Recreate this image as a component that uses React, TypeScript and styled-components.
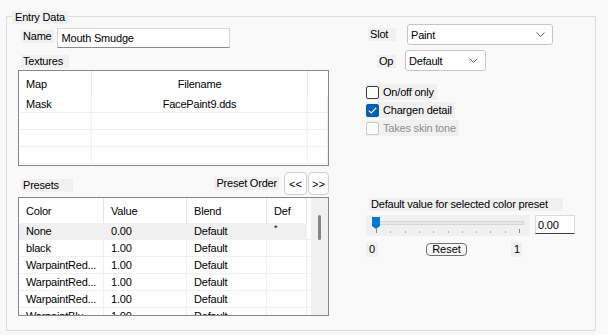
import React from 'react';
import styled, { createGlobalStyle } from 'styled-components';

const Global = createGlobalStyle`
  html, body { margin: 0; padding: 0; background: #f9f9f9; }
  body {
    font-family: "Liberation Sans", Arial, sans-serif;
    font-size: 11px;
    letter-spacing: -0.2px;
    color: #000;
    width: 608px;
    height: 335px;
    overflow: hidden;
  }
  * { box-sizing: border-box; }
`;

const Page = styled.div`
  padding: 16px 0 0 6px;
`;

const GroupBox = styled.section`
  position: relative;
  width: 590px;
  height: 315px;
  border: 1px solid #dcdcdc;
  display: flex;
  gap: 37px;
  padding-left: 11px;
`;

const Legend = styled.span`
  position: absolute;
  top: -6px;
  left: 5px;
  height: 13px;
  line-height: 13px;
  padding: 0 3px;
  background: #f0f0f0;
`;

const LeftColumn = styled.div`
  width: 311px;
  padding-top: 11px;
  display: flex;
  flex-direction: column;
  align-items: flex-start;
`;

const RightColumn = styled.div`
  width: 212px;
  padding-top: 7px;
  display: flex;
  flex-direction: column;
  align-items: flex-start;
`;

const Caption = styled.span<{ $w?: number; $mt?: number; $ml?: number }>`
  display: inline-block;
  height: 13px;
  line-height: 13px;
  padding: 0 2px 0 2px;
  background: #f0f0f0;
  white-space: nowrap;
  width: ${p => (p.$w ? `${p.$w}px` : 'auto')};
  margin-top: ${p => p.$mt ?? 0}px;
  margin-left: ${p => p.$ml ?? 0}px;
`;

const NameRow = styled.div`
  display: flex;
  align-items: flex-start;
  gap: 3px;
  padding-left: 3px;
  height: 20px;
`;

const TextBox = styled.div<{ $w: number; $h: number }>`
  width: ${p => p.$w}px;
  height: ${p => p.$h}px;
  background: #fff;
  border: 1px solid #d6d6d6;
  border-bottom-color: #8a8a8a;
  padding-left: 4px;
  display: flex;
  align-items: center;
`;

const ListBox = styled.div<{ $h: number; $mt: number }>`
  width: 311px;
  height: ${p => p.$h}px;
  margin-top: ${p => p.$mt}px;
  border: 1px solid #828790;
  background: #fff;
  display: flex;
  overflow: hidden;
`;

const ListBody = styled.div`
  flex: 1;
  overflow: hidden;
`;

const HeaderRow = styled.div<{ $cols: string; $h: number }>`
  display: grid;
  grid-template-columns: ${p => p.$cols};
  height: ${p => p.$h}px;
`;

const HeaderCell = styled.div<{ $center?: boolean }>`
  display: flex;
  align-items: center;
  justify-content: ${p => (p.$center ? 'center' : 'flex-start')};
  padding-left: ${p => (p.$center ? 0 : 7)}px;
  border-right: 1px solid #e5e5e5;
  white-space: nowrap;
  &:last-child { border-right: none; }
`;

const Row = styled.div<{ $cols: string; $selected?: boolean }>`
  display: grid;
  grid-template-columns: ${p => p.$cols};
  height: 17px;
  background: ${p => (p.$selected ? '#f0f0f0' : '#fff')};
`;

const Cell = styled.div<{ $center?: boolean; $blank?: boolean }>`
  display: flex;
  align-items: center;
  justify-content: ${p => (p.$center ? 'center' : 'flex-start')};
  padding-left: ${p => (p.$center ? 0 : 7)}px;
  border-right: 1px solid #f0f0f0;
  border-bottom: 1px solid #f0f0f0;
  white-space: nowrap;
  overflow: hidden;
  background: ${p => (p.$blank ? '#fff' : 'transparent')};
`;

const Star = styled.span`
  font-size: 9px;
  line-height: 9px;
  margin-top: -5px;
`;

const ScrollBar = styled.div`
  width: 17px;
  background: #f0f0f0;
  padding: 17px 0 0 7px;
`;

const Thumb = styled.div`
  width: 3px;
  height: 25px;
  border-radius: 2px;
  background: #858585;
`;

const PresetBar = styled.div`
  display: flex;
  align-items: flex-start;
  width: 311px;
  height: 23px;
  margin-top: 6px;
`;

const Spacer = styled.div`
  flex: 1;
`;

const SmallButton = styled.button<{ $w: number; $ml: number }>`
  width: ${p => p.$w}px;
  height: 23px;
  margin-left: ${p => p.$ml}px;
  padding: 0;
  border: 1px solid #d0d0d0;
  border-radius: 4px;
  background: #fdfdfd;
  font: inherit;
  letter-spacing: 0;
  color: #000;
`;

const FieldRow = styled.div<{ $mt?: number }>`
  display: flex;
  align-items: center;
  height: 21px;
  margin-top: ${p => p.$mt ?? 0}px;
`;

const LabelCell = styled.div`
  width: 30px;
  display: flex;
  justify-content: flex-end;
`;

const Combo = styled.div<{ $w: number; $ml: number }>`
  width: ${p => p.$w}px;
  height: 21px;
  margin-left: ${p => p.$ml}px;
  background: #fff;
  border: 1px solid #c6c6c6;
  border-radius: 3px;
  display: flex;
  align-items: center;
  justify-content: space-between;
  padding: 0 7px 0 3px;
`;

const CheckList = styled.div`
  display: flex;
  flex-direction: column;
  align-items: flex-start;
  gap: 2px;
  margin-top: 13px;
`;

const CheckRow = styled.label<{ $disabled?: boolean }>`
  display: inline-flex;
  align-items: center;
  gap: 4px;
  height: 16px;
  padding-right: 3px;
  background: #f0f0f0;
  color: ${p => (p.$disabled ? '#8d8d8d' : '#000')};
`;

const Box = styled.span<{ $checked?: boolean; $disabled?: boolean }>`
  width: 13px;
  height: 13px;
  border-radius: 2px;
  border: 1px solid ${p => (p.$checked ? '#005fb8' : p.$disabled ? '#c8c8c8' : '#3a3a3a')};
  background: ${p => (p.$checked ? '#005fb8' : '#fbfbfb')};
  display: flex;
  align-items: center;
  justify-content: center;
`;

const SliderBlock = styled.div`
  margin-top: 62px;
  display: flex;
  flex-direction: column;
  align-items: flex-start;
`;

const SliderRow = styled.div`
  display: flex;
  align-items: flex-start;
  gap: 5px;
  margin-top: 4px;
`;

const Track = styled.div`
  width: 164px;
  height: 21px;
  background: #f0f0f0;
`;

const ValueBox = styled.div`
  width: 40px;
  height: 19px;
  background: #fff;
  border: 1px solid #dadada;
  border-bottom-color: #404040;
  padding-left: 2px;
  display: flex;
  align-items: center;
`;

const ScaleRow = styled.div`
  display: flex;
  align-items: flex-start;
  margin-top: 6px;
`;

const ScaleLabel = styled.span<{ $ml?: number; $w: number }>`
  display: inline-block;
  width: ${p => p.$w}px;
  height: 15px;
  line-height: 15px;
  padding-left: 3px;
  margin-left: ${p => p.$ml ?? 0}px;
  background: #f0f0f0;
`;

const ResetButton = styled.button`
  margin-left: 48px;
  margin-top: 1px;
  width: 41px;
  height: 13px;
  padding: 0;
  border: 1px solid #707070;
  border-radius: 4px;
  background: #f7f7f7;
  font: inherit;
  line-height: 11px;
  color: #000;
`;

const Chevron = () => (
  <svg width="9" height="5" viewBox="0 0 9 5">
    <polyline points="0.5,0.5 4.5,4.5 8.5,0.5" fill="none" stroke="#606060" strokeWidth="1" />
  </svg>
);

const Check = () => (
  <svg width="9" height="7" viewBox="0 0 9 7">
    <polyline points="0.8,3.6 3.2,6 8.2,0.8" fill="none" stroke="#fff" strokeWidth="1.2" />
  </svg>
);

const TrackDrawing = () => {
  const ticks = Array.from({ length: 11 }, (_, i) => 10 + (143 * i) / 10);
  return (
    <svg width="164" height="21" viewBox="0 0 164 21">
      <rect x="12.5" y="6.5" width="145" height="3" fill="#e7e7e7" stroke="#d6d6d6" />
      {ticks.map((x, i) => (
        <line
          key={i}
          x1={Math.round(x) + 0.5}
          x2={Math.round(x) + 0.5}
          y1={i === 0 || i === 10 ? 14 : 16}
          y2={18}
          stroke={i === 0 || i === 10 ? '#8a8a8a' : '#b8b8b8'}
          strokeWidth="1"
        />
      ))}
      <path d="M6 2 H14 V11 L10 14 L6 11 Z" fill="#0078d7" />
    </svg>
  );
};

const texCols = '73px 216px 1fr';
const presetCols = '85px 83px 80px 40px 1fr';

const presets = [
  { color: 'None', value: '0.00', blend: 'Default', def: true },
  { color: 'black', value: '1.00', blend: 'Default', def: false },
  { color: 'WarpaintRed...', value: '1.00', blend: 'Default', def: false },
  { color: 'WarpaintRed...', value: '1.00', blend: 'Default', def: false },
  { color: 'WarpaintRed...', value: '1.00', blend: 'Default', def: false },
  { color: 'WarpaintBlu...', value: '1.00', blend: 'Default', def: false },
];

export default function App() {
  return (
    <>
      <Global />
      <Page>
        <GroupBox>
          <Legend>Entry Data</Legend>
          <LeftColumn>
            <NameRow>
              <Caption $mt={2}>Name</Caption>
              <TextBox $w={173} $h={20}>Mouth Smudge</TextBox>
            </NameRow>
            <Caption $mt={7} $ml={3} $w={48}>Textures</Caption>
            <ListBox $h={96} $mt={2}>
              <ListBody>
                <HeaderRow $cols={texCols} $h={25}>
                  <HeaderCell>Map</HeaderCell>
                  <HeaderCell $center>Filename</HeaderCell>
                  <HeaderCell />
                </HeaderRow>
                <Row $cols={texCols}>
                  <Cell>Mask</Cell>
                  <Cell $center>FacePaint9.dds</Cell>
                  <Cell />
                </Row>
                {[0, 1, 2, 3].map(i => (
                  <Row key={i} $cols={texCols}>
                    <Cell />
                    <Cell />
                    <Cell />
                  </Row>
                ))}
              </ListBody>
            </ListBox>
            <PresetBar>
              <Caption $mt={7} $ml={3} $w={52}>Presets</Caption>
              <Spacer />
              <Caption $mt={5}>Preset Order</Caption>
              <SmallButton $w={23} $ml={5}>&lt;&lt;</SmallButton>
              <SmallButton $w={21} $ml={1}>&gt;&gt;</SmallButton>
            </PresetBar>
            <ListBox $h={119} $mt={2}>
              <ListBody>
                <HeaderRow $cols={presetCols} $h={25}>
                  <HeaderCell>Color</HeaderCell>
                  <HeaderCell>Value</HeaderCell>
                  <HeaderCell>Blend</HeaderCell>
                  <HeaderCell>Def</HeaderCell>
                  <HeaderCell />
                </HeaderRow>
                {presets.map((p, i) => (
                  <Row key={i} $cols={presetCols} $selected={i === 0}>
                    <Cell>{p.color}</Cell>
                    <Cell>{p.value}</Cell>
                    <Cell>{p.blend}</Cell>
                    <Cell>{p.def ? <Star>*</Star> : null}</Cell>
                    <Cell $blank />
                  </Row>
                ))}
              </ListBody>
              <ScrollBar>
                <Thumb />
              </ScrollBar>
            </ListBox>
          </LeftColumn>
          <RightColumn>
            <FieldRow>
              <LabelCell>
                <Caption $w={28}>Slot</Caption>
              </LabelCell>
              <Combo $w={146} $ml={11}>
                <span>Paint</span>
                <Chevron />
              </Combo>
            </FieldRow>
            <FieldRow $mt={5}>
              <LabelCell>
                <Caption $w={19} $mt={2}>Op</Caption>
              </LabelCell>
              <Combo $w={81} $ml={9}>
                <span>Default</span>
                <Chevron />
              </Combo>
            </FieldRow>
            <CheckList>
              <CheckRow>
                <Box />
                On/off only
              </CheckRow>
              <CheckRow>
                <Box $checked>
                  <Check />
                </Box>
                Chargen detail
              </CheckRow>
              <CheckRow $disabled>
                <Box $disabled />
                Takes skin tone
              </CheckRow>
            </CheckList>
            <SliderBlock>
              <Caption $ml={3} $w={194}>Default value for selected color preset</Caption>
              <SliderRow>
                <Track>
                  <TrackDrawing />
                </Track>
                <ValueBox>0.00</ValueBox>
              </SliderRow>
              <ScaleRow>
                <ScaleLabel $w={12}>0</ScaleLabel>
                <ResetButton>Reset</ResetButton>
                <ScaleLabel $w={11} $ml={44}>1</ScaleLabel>
              </ScaleRow>
            </SliderBlock>
          </RightColumn>
        </GroupBox>
      </Page>
    </>
  );
}
